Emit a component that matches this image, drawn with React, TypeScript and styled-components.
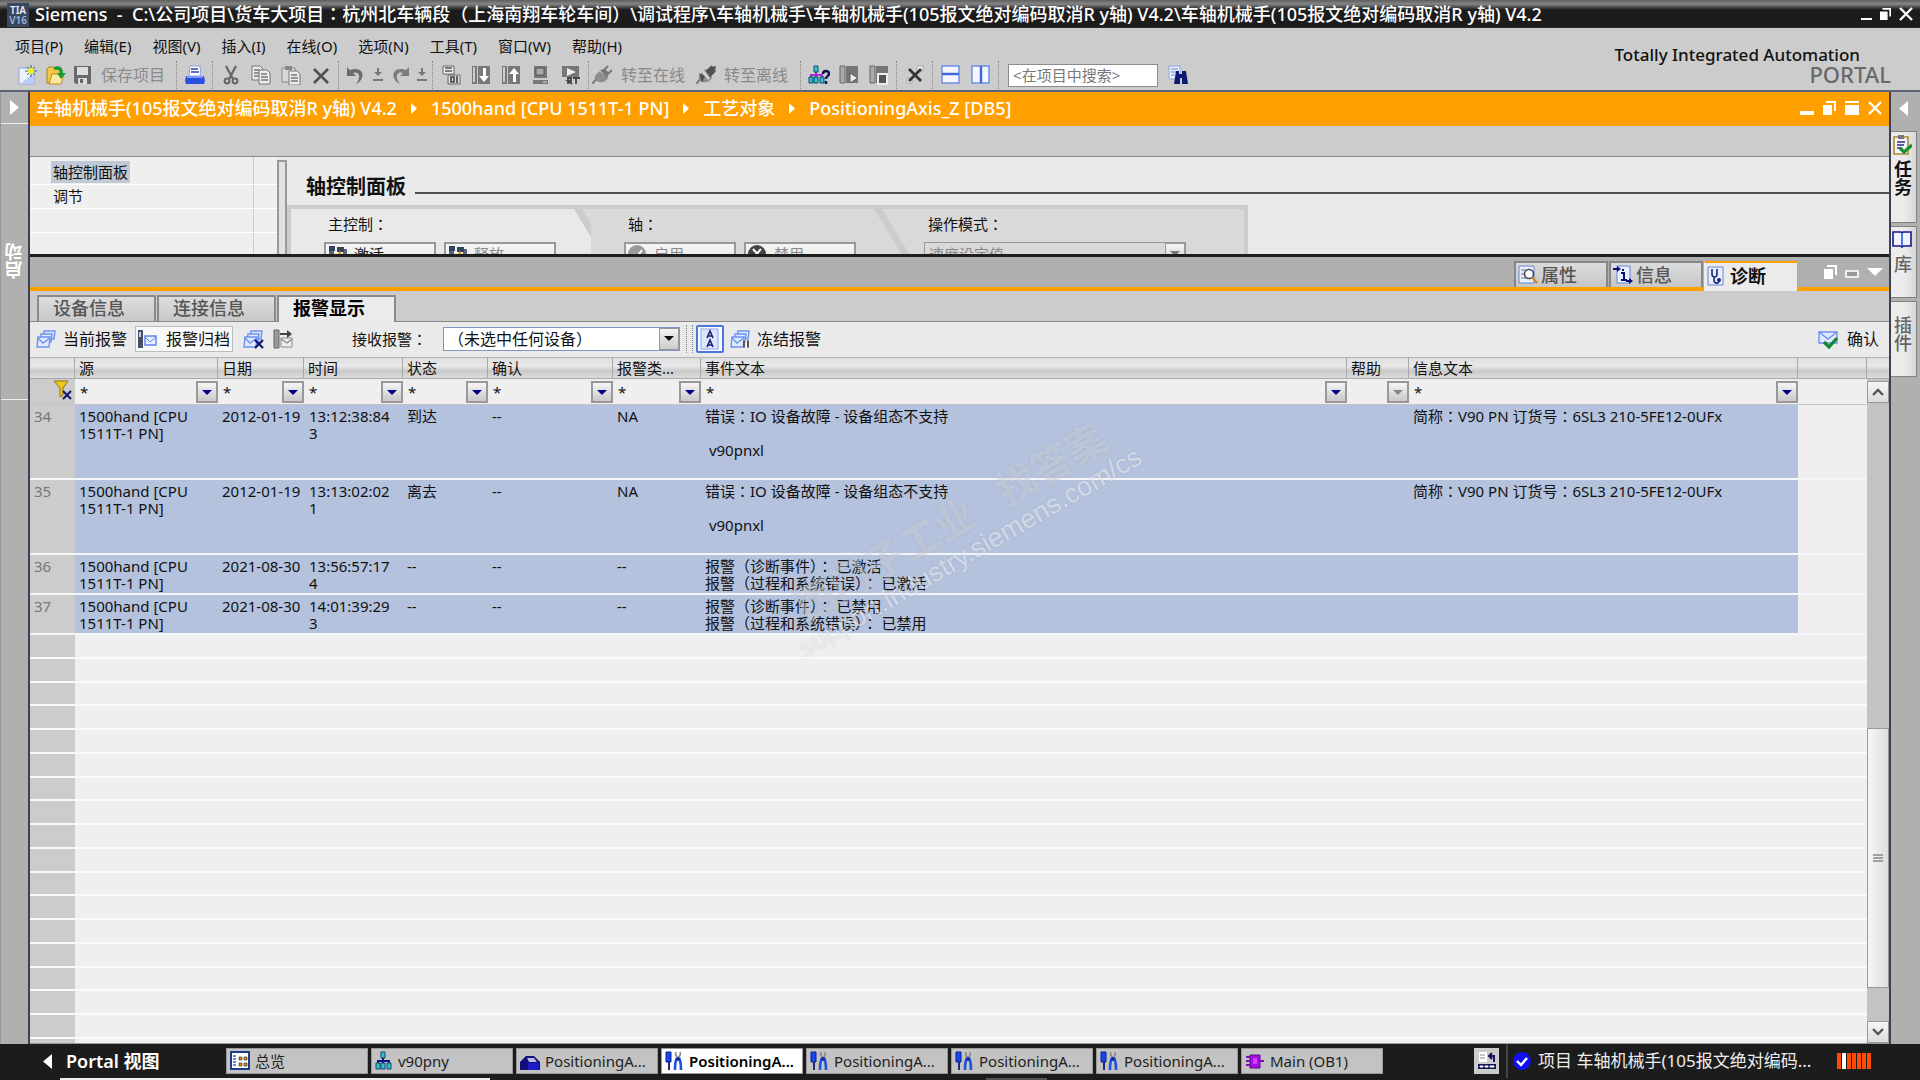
import React from "react";
import styled, { createGlobalStyle, css } from "styled-components";

const Global = createGlobalStyle`
  *, *::before, *::after { box-sizing: border-box; }
  body { margin: 0; background: #b0b0b0; }
  body, button, input, select, table {
    font-family: "Noto Sans", "Noto Sans CJK SC", sans-serif;
    font-size: 15px;
    line-height: 18px;
    color: #111;
  }
  button { border: 0; padding: 0; background: none; }
  h1, h2 { margin: 0; font-size: inherit; }
`;

/* ---------- frame ---------- */
const Window = styled.div`
  display: flex;
  flex-direction: column;
  height: 100vh;
  overflow: hidden;
`;
const TitleBar = styled.header`
  flex: none;
  display: flex;
  align-items: center;
  height: 28px;
  padding: 0 7px 0 7px;
  background: linear-gradient(#5e5e5e 0, #858585 4px, #3c3c3c 8px, #1c1c1c 10px, #1c1c1c 27px, #333 28px);
`;
const TitleText = styled.h1`
  flex: 1;
  margin-left: 6px;
  color: #fff;
  font-size: 18px;
  font-weight: 500;
  line-height: 28px;
  white-space: pre;
`;
const WindowButtons = styled.div<{ $gap: number }>`
  display: flex;
  align-items: center;
  gap: ${(p) => p.$gap}px;
  button { display: flex; }
`;
const MenuArea = styled.div`
  flex: none;
  display: flex;
  justify-content: space-between;
  height: 64px;
  background: #ccc;
  border-bottom: 2px solid #5c6372;
`;
const MenuRow = styled.nav`
  display: flex;
  align-items: flex-start;
  gap: 21px;
  padding: 8px 0 0 15px;
  height: 32px;
  button { line-height: 20px; white-space: nowrap; }
`;
const Brand = styled.div`
  padding: 18px 29px 0 0;
  text-align: right;
  font-weight: 500;
  line-height: 20px;
`;
const BrandTop = styled.div`
  font-size: 17px;
  margin-right: 31px;
  line-height: 18px;
`;
const BrandBottom = styled.div`
  font-size: 22px;
  font-weight: 500;
  color: #696969;
`;
const Tools = styled.div`
  display: flex;
  align-items: center;
  height: 30px;
  padding-left: 12px;
`;
const ToolButton = styled.button<{ $w?: number }>`
  display: flex;
  align-items: center;
  justify-content: center;
  width: ${(p) => p.$w ?? 30}px;
  height: 26px;
`;
const LabelTool = styled.button<{ $gap: number; $pad: number }>`
  display: flex;
  align-items: center;
  gap: ${(p) => p.$gap}px;
  padding-right: ${(p) => p.$pad}px;
  font-size: 16px;
  color: #8a8a8a;
  white-space: nowrap;
`;
const Sep = styled.span`
  width: 1px;
  height: 28px;
  margin: 0 3px 0 2px;
  border-left: 1px dotted #888;
`;
const Search = styled.input`
  width: 150px;
  height: 23px;
  margin: 0 5px 0 6px;
  padding: 0 4px;
  border: 1px solid #8c8c8c;
  border-radius: 0;
  background: #fff;
  &::placeholder { color: #777; opacity: 1; }
`;

const Body = styled.div`
  flex: 1;
  display: flex;
  min-height: 0;
`;
const LeftStrip = styled.aside`
  flex: none;
  display: flex;
  flex-direction: column;
  width: 30px;
  background: #b0b0b0;
  border-left: 1px solid #999;
  border-right: 2px solid #3c4050;
`;
const StripTop = styled.button`
  display: flex;
  align-items: center;
  justify-content: center;
  height: 32px;
  border-bottom: 1px solid #eee;
`;
const StripLabel = styled.button`
  height: 276px;
  padding: 0 2px;
  border-top: 1px solid #eee;
  color: #fff;
  font-size: 18px;
  font-weight: 700;
  line-height: 22px;
  writing-mode: vertical-rl;
  transform: rotate(180deg);
`;
const RightStrip = styled.aside`
  flex: none;
  width: 31px;
  background: #b0b0b0;
  border-left: 2px solid #3c4050;
  display: flex;
  flex-direction: column;
  gap: 3px;
`;
const RightTop = styled.button`
  display: flex;
  align-items: center;
  justify-content: center;
  width: 24px;
  height: 28px;
  margin: 2px 0 6px;
`;
const SideTab = styled.button<{ $h: number; $active?: boolean; $pad?: number }>`
  display: flex;
  flex-direction: column;
  align-items: center;
  gap: 5px;
  width: 26px;
  height: ${(p) => p.$h}px;
  padding: ${(p) => p.$pad ?? 3}px 3px 0 0;
  border: 1px solid #828282;
  border-left: 0;
  background: linear-gradient(90deg, #ececec 50%, #d8d8d8);
  span {
    writing-mode: vertical-rl;
    font-size: 18px;
    line-height: 22px;
    font-weight: ${(p) => (p.$active ? 700 : 500)};
    color: ${(p) => (p.$active ? "#111" : "#666")};
  }
`;
const Main = styled.main`
  flex: 1;
  min-width: 0;
  display: flex;
  flex-direction: column;
`;

/* ---------- editor ---------- */
const Crumbs = styled.div`
  flex: none;
  display: flex;
  align-items: center;
  height: 34px;
  padding: 0 7px 2px 6px;
  background: #ffa000;
  color: #fff;
`;
const CrumbList = styled.nav`
  flex: 1;
  display: flex;
  align-items: center;
  gap: 14px;
  font-size: 18px;
  font-weight: 500;
  line-height: 28px;
  white-space: nowrap;
`;
const EditorBar = styled.div`
  flex: none;
  height: 31px;
  background: #ccc;
  border-bottom: 1px solid #8a8a8a;
`;
const Editor = styled.section`
  flex: none;
  display: flex;
  height: 97px;
  overflow: hidden;
  background: #eaeaea;
`;
const Tree = styled.ul`
  flex: none;
  width: 247px;
  margin: 0;
  padding: 4px 0 0;
  list-style: none;
  background: linear-gradient(90deg, transparent 223px, #ccc 223px, #ccc 224px, transparent 224px) #efefef;
`;
const TreeItem = styled.li<{ $sel?: boolean }>`
  height: 24px;
  padding-left: 21px;
  border-bottom: 1px solid #fff;
  button {
    padding: 0 2px;
    line-height: 22px;
    background: ${(p) => (p.$sel ? "#bfcad6" : "none")};
  }
`;
const Splitter = styled.div`
  flex: none;
  width: 10px;
  margin-top: 3px;
  border: 2px solid #999;
  border-bottom: 0;
  background: #e2e2e2;
`;
const Panel = styled.div`
  flex: 1;
  min-width: 0;
`;
const PanelHead = styled.div`
  display: flex;
  align-items: center;
  gap: 9px;
  height: 48px;
  padding: 12px 0 0 19px;
  &::after {
    content: "";
    flex: 1;
    height: 2px;
    margin-top: 12px;
    background: #505050;
  }
  h2 { font-size: 20px; line-height: 24px; }
`;
const Steps = styled.div`
  display: grid;
  grid-template-columns: 300px 300px 359px;
  width: 961px;
  height: 80px;
  border: 4px solid #ccc;
  border-bottom: 0;
  background: #d9d9d9;
`;
const Step = styled.div<{ $first?: boolean; $last?: boolean }>`
  position: relative;
  padding: 6px 0 0 37px;
  ${(p) =>
    !p.$last &&
    css`
      &::before, &::after {
        content: "";
        position: absolute;
        inset: 0;
        right: -24px;
        background: #ccc;
        clip-path: polygon(283px 0, 291px 0, 319px 46px, 300px 80px, 290px 80px, 311px 46px);
      }
      &::before {
        background: ${p.$first ? "#e9e9e9" : "#d9d9d9"};
        clip-path: polygon(0 0, 283px 0, 311px 46px, 290px 80px, 0 80px);
      }
    `}
  > * { position: relative; z-index: 1; }
`;
const StepLabel = styled.div`
  display: block;
  line-height: 18px;
  margin-bottom: 9px;
`;
const StepRow = styled.div`
  display: flex;
  gap: 8px;
  margin-left: -4px;
`;
const StepButton = styled.button<{ $dim?: boolean }>`
  display: flex;
  align-items: center;
  gap: 6px;
  width: 112px;
  height: 24px;
  padding-left: 2px;
  border: 2px solid #999;
  background: linear-gradient(#f5f5f5, #e4e4e4);
  color: ${(p) => (p.$dim ? "#8a8a8a" : "#111")};
`;
const Dropdown = styled.div<{ $w: number; $blue?: boolean }>`
  display: flex;
  width: ${(p) => p.$w}px;
  height: 24px;
  margin-right: 4px;
  border: 1px solid ${(p) => (p.$blue ? "#7f96c4" : "#999")};
  background: ${(p) => (p.$blue ? "#fff" : "#d9d9d9")};
  position: relative;
  select {
    appearance: none;
    flex: 1;
    min-width: 0;
    border: 0;
    border-radius: 0;
    padding: 0 24px 0 4px;
    background: none;
    font-size: ${(p) => (p.$blue ? 16 : 15)}px;
    color: ${(p) => (p.$blue ? "#111" : "#888")};
    opacity: 1;
  }
  &::after {
    content: "";
    position: absolute;
    top: 0;
    right: 0;
    width: 20px;
    height: 100%;
    border: 1px solid #999;
    background: linear-gradient(#f4f4f4, #ccc);
    pointer-events: none;
  }
  svg { position: absolute; right: 5px; top: 8px; z-index: 1; pointer-events: none; }
`;

/* ---------- inspector ---------- */
const InspectorHead = styled.div`
  flex: none;
  display: flex;
  justify-content: flex-end;
  align-items: flex-end;
  height: 37px;
  border-top: 3px solid #1e1e1e;
  background: linear-gradient(#b0b0b0 30px, #ffa000 30px);
`;
const HeadTab = styled.button<{ $active?: boolean }>`
  display: flex;
  align-items: center;
  gap: 3px;
  width: 94px;
  height: 26px;
  margin: 0 1px 4px 0;
  padding-left: 2px;
  border: 2px solid #878787;
  border-bottom: 0;
  background: linear-gradient(#dcdcdc, #c6c6c6);
  color: #555;
  font-size: 18px;
  line-height: 22px;
  font-weight: 500;
  ${(p) =>
    p.$active &&
    css`
      height: 30px;
      margin-bottom: 0;
      padding-bottom: 3px;
      border-color: #ffa000 #aaa transparent #eee;
      border-width: 2px 1px 0;
      background: #ebebeb;
      color: #111;
      font-weight: 700;
    `}
`;
const HeadIcons = styled.div`
  display: flex;
  align-items: center;
  gap: 8px;
  height: 34px;
  padding: 0 6px 4px 25px;
  button { display: flex; }
`;
const Tabs = styled.div`
  flex: none;
  display: flex;
  gap: 1px;
  height: 31px;
  padding: 4px 7px 0;
  background: #ccc;
  border-bottom: 1px solid #8a8a8a;
`;
const Tab = styled.button<{ $active?: boolean }>`
  width: 119px;
  height: 26px;
  padding: 0 0 3px 14px;
  border: 2px solid #8a8a8a;
  border-bottom: 0;
  background: linear-gradient(#ddd, #c8c8c8);
  color: #555;
  font-size: 18px;
  font-weight: 500;
  line-height: 22px;
  text-align: left;
  ${(p) =>
    p.$active &&
    css`
      height: 27px;
      padding-bottom: 4px;
      background: #ebebeb;
      color: #000;
      font-weight: 700;
    `}
`;
const AlarmTools = styled.div`
  flex: none;
  display: flex;
  align-items: center;
  height: 35px;
  padding: 0 10px 1px 6px;
  background: #eaeaea;
`;
const AlarmButton = styled.button<{ $on?: boolean; $tight?: boolean; $last?: boolean }>`
  display: flex;
  align-items: center;
  gap: ${(p) => (p.$tight ? 6 : 9)}px;
  height: 32px;
  margin-right: ${(p) => (p.$last ? 0 : 8)}px;
  font-size: 16px;
  white-space: nowrap;
  ${(p) =>
    p.$on &&
    css`
      margin-right: 10px;
      padding: 0 2px 0 1px;
      height: 26px;
      border: 1px solid #bbb;
      background: #f8f8f8;
    `}
`;
const SmallIcon = styled.button`
  display: flex;
  margin-right: 9px;
`;
const FieldLabel = styled.label`
  margin: 0 16px 0 50px;
`;
const AutoScroll = styled.button`
  display: flex;
  align-items: center;
  justify-content: center;
  width: 28px;
  height: 28px;
  margin-right: 6px;
  border: 2px solid #4a78d8;
  border-radius: 2px;
  background: #f8faff;
`;
const Grow = styled.span`
  flex: 1;
`;

/* ---------- alarm table ---------- */
const GridArea = styled.div`
  flex: 1;
  display: flex;
  min-height: 0;
  background: #efefef;
  border-bottom: 1px solid #999;
`;
const GridMain = styled.div`
  position: relative;
  flex: 1;
  min-width: 0;
  display: flex;
  flex-direction: column;
`;
const headFill = "linear-gradient(#dedede, #e9e9e9 8px, #c9c9c9 13px, #dcdcdc)";
const Table = styled.table`
  flex: none;
  width: 100%;
  table-layout: fixed;
  border-collapse: separate;
  border-spacing: 0;
`;
const Th = styled.th`
  height: 22px;
  padding: 0 0 0 4px;
  border-top: 1px solid #b5b5b5;
  border-right: 1px solid #aaa;
  border-bottom: 1px solid #aaa;
  background: ${headFill};
  font-weight: 400;
  line-height: 18px;
  text-align: left;
  white-space: nowrap;
  overflow: hidden;
`;
const FilterTd = styled.td<{ $corner?: boolean }>`
  height: 26px;
  padding: 0;
  border-bottom: 1px solid #c4c4c4;
  background: ${(p) => (p.$corner ? "#ccc" : "#efefef")};
  text-align: right;
  line-height: 0;
`;
const FilterCell = styled.div`
  display: flex;
  height: 25px;
  padding-top: 1px;
  align-items: center;
  input {
    flex: 1;
    min-width: 0;
    height: 22px;
    border: 0;
    padding: 0 0 0 5px;
    background: none;
  }
`;
const FilterButton = styled.button`
  display: flex;
  align-items: center;
  justify-content: center;
  width: 22px;
  height: 22px;
  border: 2px solid #999;
  background: linear-gradient(#f6f6f6, #c8c8c8);
`;
const Row = styled.tr<{ $h: number }>`
  height: ${(p) => p.$h}px;
`;
const Td = styled.td`
  padding: 3px 6px 0 4px;
  border-bottom: 2px solid #f4f6fa;
  background: #b4c2de;
  vertical-align: top;
  line-height: 17px;
  white-space: pre-wrap;
  word-break: break-word;
`;
const DateTd = styled(Td)`
  padding-right: 0;
  white-space: nowrap;
`;
const TimeTd = styled(Td)`
  padding-left: 5px;
  word-break: break-all;
`;
const NumTd = styled(Td)`
  background: #ccc;
  color: #777;
`;
const BlankTd = styled(Td)`
  background: #efefef;
`;
const Filler = styled.div`
  flex: 1;
  display: flex;
  flex-direction: column;
  padding-bottom: 4px;
  background: linear-gradient(90deg, #ccc 45px, #efefef 45px);
`;
const FillerRow = styled.div`
  flex: 1;
  border-bottom: 2px solid #fafafa;
`;
const ScrollCol = styled.div`
  flex: none;
  display: flex;
  flex-direction: column;
  width: 22px;
  background: #c3c3c3;
`;
const ScrollHead = styled.div`
  height: 22px;
  border-top: 1px solid #b5b5b5;
  border-bottom: 1px solid #aaa;
  margin-bottom: 2px;
  background: ${headFill};
`;
const ScrollButton = styled.button`
  display: flex;
  align-items: center;
  justify-content: center;
  flex: none;
  height: 22px;
  border: 1px solid #999;
  background: linear-gradient(#f6f6f6, #dcdcdc);
`;
const Track = styled.div`
  flex: 1;
  display: flex;
  flex-direction: column;
`;
const Thumb = styled.div`
  flex: 0 0 42%;
  display: flex;
  align-items: center;
  justify-content: center;
  border: 1px solid #999;
  background: linear-gradient(90deg, #f6f6f6, #dedede);
`;
const TrackSpace = styled.div<{ $n: number }>`
  flex: ${(p) => p.$n};
`;
const Watermark = styled.div`
  position: absolute;
  left: 778px;
  top: 234px;
  transform: rotate(-30deg);
  transform-origin: 0 100%;
  color: rgba(255, 255, 255, 0.3);
  text-shadow: 0 0 2px rgba(120, 125, 140, 0.3);
  font-weight: 700;
  white-space: nowrap;
  pointer-events: none;
`;
const MarkBig = styled.div`
  display: flex;
  gap: 32px;
  padding-left: 18px;
  font-size: 40px;
  line-height: 42px;
`;
const MarkUrl = styled.div`
  font-family: "Liberation Sans", Arial, sans-serif;
  font-size: 27px;
  font-weight: 400;
  line-height: 30px;
  color: rgba(255, 255, 255, 0.5);
`;

/* ---------- bottom bar ---------- */
const Bottom = styled.footer`
  flex: none;
  display: flex;
  align-items: center;
  height: 36px;
  padding: 0 48px 2px 43px;
  background: linear-gradient(90deg, transparent 60px, #eee 60px, #eee 490px, transparent 490px, transparent 986px, #555 986px, #555 1047px, transparent 1047px)
      0 100% / 100% 2px no-repeat, #1c1c1c;
`;
const PortalButton = styled.button`
  display: flex;
  align-items: center;
  gap: 14px;
  width: 183px;
  color: #fff;
  font-size: 18px;
  font-weight: 600;
`;
const TaskList = styled.div`
  flex: 1;
  display: flex;
  gap: 3px;
`;
const Task = styled.button<{ $active?: boolean }>`
  display: flex;
  align-items: center;
  gap: 5px;
  width: 142px;
  height: 26px;
  padding-left: 3px;
  border: 1px solid #999;
  background: ${(p) => (p.$active ? "#fff" : "#c3c3c3")};
  color: ${(p) => (p.$active ? "#000" : "#222")};
  font-weight: ${(p) => (p.$active ? 600 : 400)};
  white-space: nowrap;
`;
const Square = styled.button`
  display: flex;
  align-items: center;
  justify-content: center;
  width: 25px;
  height: 26px;
  background: #ccc;
`;
const Status = styled.div`
  display: flex;
  align-items: center;
  gap: 7px;
  height: 34px;
  margin-left: 7px;
  padding-left: 5px;
  border-left: 2px solid #444;
  color: #eee;
  font-size: 17px;
  white-space: nowrap;
`;
const StatusText = styled.span`
  width: 292px;
`;

/* Full-width colons sit in the middle of their box */
const Colon = styled.span`
  font-family: "Noto Sans CJK TC", sans-serif;
  line-height: 0;
`;
const T = ({ s }: { s: string }) => (
  <>
    {s.split(/(：)/).map((p, i) => (p === "：" ? <Colon key={i} lang="zh-TW">：</Colon> : p))}
  </>
);

/* ---------- icons ---------- */
const Tri = ({ d, c, s = 10 }: { d: "l" | "r" | "d"; c: string; s?: number }) => (
  <svg
    width={d === "d" ? s + 2 : s - 1}
    height={d === "d" ? Math.round(s * 0.6) : Math.round(s * 1.5)}
    viewBox="0 0 10 10"
    preserveAspectRatio="none"
    fill={c}
  >
    <path d={d === "l" ? "M10 0v10L0 5z" : d === "r" ? "M0 0v10l10-5z" : "M0 0h10L5 10z"} />
  </svg>
);
const Ic = ({ children, w = 20 }: { children: React.ReactNode; w?: number }) => (
  <svg width={w} height="20" viewBox={`0 0 ${w} 20`} fill="none">
    {children}
  </svg>
);
const Restore = ({ s = 13 }: { s?: number }) => (
  <svg width={s} height={s + 1} viewBox="0 0 13 14" fill="#fff">
    <path d="M3 0h10v10h-2V2H3zM0 4h9v10H0z" />
  </svg>
);
const Close = () => (
  <svg width="14" height="14" viewBox="0 0 14 14" stroke="#fff" strokeWidth="2.4">
    <path d="M1 1l12 12M13 1L1 13" />
  </svg>
);
const Envelopes = ({ extra }: { extra?: React.ReactNode }) => (
  <Ic w={21}>
    <g fill="#dfe8ff" stroke="#6d92f0" strokeWidth="1.4">
      <path d="M8 2h11l-1 8H7z" />
      <path d="M5 5h11l-1 8H4z" />
      <path d="M2 8h12l-1 10H1z" />
      <path d="M2 9l5 5 7-5" />
    </g>
    {extra}
  </Ic>
);
const Plug = ({ off }: { off?: boolean }) => (
  <Ic w={20}>
    <path d="M1 19c0-3 2-3 4-5" stroke="#777" strokeWidth="2" />
    <path d="M4 9l4-3 8 8-4 3c-3 1-6 0-8-2s-2-4 0-6z" fill="#8e8e8e" transform="rotate(-8 9 11)" />
    <path d="M8 5l7 8 2-5-4-4z" fill="#777" />
    <path d="M12 5l4-4M16 9l4-4" stroke="#777" strokeWidth="2" />
    {off && <path d="M10 6l4-4 6-1-2 7-4 4zM3 8l6 3-3 7z" fill="#505050" />}
    {off && <path d="M7 7l6 7" stroke="#ddd" strokeWidth="2" />}
  </Ic>
);
const Network = ({ q }: { q?: boolean }) => (
  <Ic w={q ? 22 : 18}>
    <path d="M8 6v5M3 14v-4h11v4M8 10v4" stroke={q ? "#a030d0" : "#10108a"} strokeWidth="2" />
    <path d="M6 1h4v6H6zM1 12h4v6H1zM6 12h4v6H6zM12 12h4v6h-4z" fill="#2bc4c8" stroke="#16456e" strokeWidth="1" />
    {q && (
      <path d="M15 9c0-4 6-4 6 0 0 2-3 2-3 5M18 16v3" stroke="#10105a" strokeWidth="2.4" />
    )}
  </Ic>
);
const AxisTools = () => (
  <Ic w={19}>
    <path d="M1 1h5v10H1z" fill="#1a48e8" stroke="#0a1e90" />
    <path d="M3 11h2v8H3z" fill="#222a70" />
    <path d="M11 1c-1 2 0 4 2 6M15 1c1 2 0 4-2 6" stroke="#888" strokeWidth="1.6" />
    <path d="M12 7c-2 3-2 6-2 12M14 7c2 3 2 6 2 12" stroke="#1f50e0" strokeWidth="2.6" />
    <circle cx="13" cy="8" r="2" fill="#1030a0" />
  </Ic>
);
const StepDown = () => (
  <svg width="10" height="14" viewBox="0 0 10 14">
    <path d="M4 0h2v4h3L5 8 1 4h3zM0 11h10v2H0z" fill="#777" />
  </svg>
);
const Page = ({ x = 0, y = 0, c = "#777" }: { x?: number; y?: number; c?: string }) => (
  <g transform={`translate(${x} ${y})`}>
    <path d="M1 1h8l3 3v11H1z" fill="#ececec" stroke={c} strokeWidth="1" />
    <path d="M3 5h6M3 8h7M3 11h7" stroke={c} strokeWidth="1.5" />
  </g>
);
const Device = ({ arrow }: { arrow: "d" | "u" }) => (
  <Ic>
    <path d="M1 1h5v18H1zM7 1h12v18H7z" fill="#787878" />
    <path d="M2 2h2v15H2z" fill="#ccc" />
    <path
      d={arrow === "d" ? "M12 3h3v8h3l-5 6-5-6h4z" : "M12 17h3V9h3l-5-6-5 6h4z"}
      fill="#fff"
    />
  </Ic>
);
const Module = ({ kind }: { kind: "play" | "stop" }) => (
  <Ic>
    <path d="M1 1h5v17H1z" fill="#aaa" stroke="#666" />
    <path d="M7 1h12v17H7z" fill="#777" />
    {kind === "play" ? (
      <path d="M11 8l8 5-8 5z" fill="#eee" stroke="#555" />
    ) : (
      <path d="M9 9h9v10H9z" fill="#555" stroke="#eee" strokeWidth="2" />
    )}
  </Ic>
);
const Drive = () => (
  <Ic>
    <path d="M1 4h5v6h9V5h4v10H7L1 12z" fill="#56657c" />
    <path d="M1 2h6v5H1zM9 3h7v5H9z" fill="#34435c" />
    <path d="M8 12l4-5 4 6z" fill="#e99a10" />
  </Ic>
);
const Layout = ({ v }: { v?: boolean }) => (
  <Ic>
    <path d="M1 1h17v17H1z" fill="#f4f7ff" stroke="#6f8fe8" strokeWidth="1.5" />
    <path d={v ? "M10 1v17" : "M1 9h17"} stroke="#4468d8" strokeWidth="2.5" />
  </Ic>
);

const menus = ["项目(P)", "编辑(E)", "视图(V)", "插入(I)", "在线(O)", "选项(N)", "工具(T)", "窗口(W)", "帮助(H)"];

const columns: { label: string; w?: number; filter?: "on" | "off" }[] = [
  { label: "源", w: 143, filter: "on" },
  { label: "日期", w: 86, filter: "on" },
  { label: "时间", w: 99, filter: "on" },
  { label: "状态", w: 85, filter: "on" },
  { label: "确认", w: 125, filter: "on" },
  { label: "报警类...", w: 88, filter: "on" },
  { label: "事件文本", filter: "on" },
  { label: "帮助", w: 62, filter: "off" },
  { label: "信息文本", w: 389, filter: "on" },
];

const fault = "错误：IO 设备故障 - 设备组态不支持\n\n v90pnxl";
const info = "简称：V90 PN 订货号：6SL3 210-5FE12-0UFx";
const alarms = [
  { n: 34, h: 75, date: "2012-01-19", time: "13:12:38:843", st: "到达", type: "NA", text: fault, info },
  { n: 35, h: 75, date: "2012-01-19", time: "13:13:02:021", st: "离去", type: "NA", text: fault, info },
  { n: 36, h: 40, date: "2021-08-30", time: "13:56:57:174", st: "--", type: "--", text: "报警（诊断事件）： 已激活\n报警（过程和系统错误）： 已激活", info: "" },
  { n: 37, h: 40, date: "2021-08-30", time: "14:01:39:293", st: "--", type: "--", text: "报警（诊断事件）： 已禁用\n报警（过程和系统错误）： 已禁用", info: "" },
];

const OverviewIcon = () => (
  <Ic>
    <path d="M1 1h18v17H1z" fill="#fff" stroke="#1c3c88" strokeWidth="2" />
    <path d="M3 5h3M3 8h3M3 11h3M3 14h3" stroke="#3a62c0" strokeWidth="1.5" />
    <path d="M9 6h3v3H9zM14 6h3v3h-3zM9 12h3v3H9zM14 12h3v3h-3z" fill="#e08a20" stroke="#222" strokeWidth=".6" />
  </Ic>
);
const ObjectIcon = () => (
  <Ic>
    <path d="M0 11l6-6h8l6 6v8H0z" fill="#10107a" />
    <path d="M8 12h11v7H8z" fill="#1c1cc8" />
    <path d="M7 7h7l3 4H9z" fill="#b8b8e0" />
  </Ic>
);
const BlockIcon = () => (
  <Ic>
    <path d="M5 4h10v13H5z" fill="#a010e0" stroke="#5c0890" />
    <path d="M1 6h4M1 10h4M1 14h4M15 10h4" stroke="#7a10b8" strokeWidth="2" />
    <path d="M8 7h4v6H8z" fill="#d040ff" />
  </Ic>
);
const tasks: { label: string; icon: React.ReactNode; active?: boolean }[] = [
  { label: "总览", icon: <OverviewIcon /> },
  { label: "v90pny", icon: <Network /> },
  { label: "PositioningA...", icon: <ObjectIcon /> },
  { label: "PositioningA...", icon: <AxisTools />, active: true },
  { label: "PositioningA...", icon: <AxisTools /> },
  { label: "PositioningA...", icon: <AxisTools /> },
  { label: "PositioningA...", icon: <AxisTools /> },
  { label: "Main (OB1)", icon: <BlockIcon /> },
];

const title =
  "Siemens  -  C:\\公司项目\\货车大项目：杭州北车辆段（上海南翔车轮车间）\\调试程序\\车轴机械手\\车轴机械手(105报文绝对编码取消R y轴) V4.2\\车轴机械手(105报文绝对编码取消R y轴) V4.2";

const MainTools = () => (
  <Tools>
    <ToolButton $w={29} aria-label="新建">
      <Ic>
        <path d="M2 3h11l4 4v12H2z" fill="#eef3ff" stroke="#8ea4dc" />
        <path d="M4 18L16 9v9z" fill="#b9cbfa" />
        <path d="M14 0v12M8 6h12M10 2l8 8M18 2l-8 8" stroke="#2c6d60" strokeWidth="1" />
        <circle cx="14" cy="6" r="3" fill="#f4f020" />
      </Ic>
    </ToolButton>
    <ToolButton $w={29} aria-label="打开">
      <Ic>
        <path d="M1 4l2-2h5l2 2h4v14H1z" fill="#f3c64a" stroke="#b07c18" />
        <path d="M3 19l3-10h12l-3 10z" fill="#fce9a2" stroke="#c08a20" />
        <path d="M8 2c6-2 9 1 9 6h3l-5 6-4-6h3c0-3-2-4-6-3z" fill="#1d9a34" />
      </Ic>
    </ToolButton>
    <LabelTool $gap={8} $pad={9}>
      <Ic w={23}>
        <path d="M4 1h17v18H6l-2-2z" fill="#6a6a6a" />
        <path d="M7 2h11v8H7zM8 13h9v6H8z" fill="#ddd" />
        <path d="M10 14h3v4h-3z" fill="#666" />
      </Ic>
      保存项目
    </LabelTool>
    <Sep />
    <ToolButton aria-label="打印">
      <Ic>
        <path d="M5 1h10l1 10H4z" fill="#fff" stroke="#8ca0d8" />
        <path d="M6 4h7M6 7h8" stroke="#2b3fb0" strokeWidth="1.5" />
        <path d="M1 11h18l1 5-1 3H1l-1-3z" fill="#2a50e0" />
        <path d="M2 11h16v2H2z" fill="#7d9bff" />
      </Ic>
    </ToolButton>
    <Sep />
    <ToolButton aria-label="剪切">
      <Ic>
        <path d="M5 1l7 13M15 1L8 14" stroke="#666" strokeWidth="2.2" />
        <circle cx="6" cy="16" r="2.4" stroke="#666" strokeWidth="2" />
        <circle cx="14" cy="16" r="2.4" stroke="#666" strokeWidth="2" />
      </Ic>
    </ToolButton>
    <ToolButton aria-label="复制"><Ic><Page /><Page x={7} y={4} /></Ic></ToolButton>
    <ToolButton aria-label="粘贴">
      <Ic>
        <path d="M1 3h13v14H1z" fill="#d8d8d8" stroke="#8a8a8a" />
        <path d="M4 1h7v4H4z" fill="#888" />
        <Page x={7} y={5} />
      </Ic>
    </ToolButton>
    <ToolButton aria-label="删除"><Ic><path d="M3 4l14 14M17 4L3 18" stroke="#505050" strokeWidth="2.6" /></Ic></ToolButton>
    <Sep />
    <ToolButton $w={28} aria-label="撤消">
      <Ic>
        <path d="M1 2v9h9L7 8c5-2 8 2 5 8l-2 3c9-4 9-16-2-15L4 5z" fill="#6c6c6c" />
      </Ic>
    </ToolButton>
    <ToolButton $w={16} aria-label="撤消列表"><StepDown /></ToolButton>
    <ToolButton $w={28} aria-label="重做">
      <Ic>
        <path d="M19 2v9h-9l3-3C8 6 5 10 8 16l2 3C1 15 1 3 12 4l4 1z" fill="#7c7c7c" />
      </Ic>
    </ToolButton>
    <ToolButton $w={16} aria-label="重做列表"><StepDown /></ToolButton>
    <Sep />
    <ToolButton aria-label="编译">
      <Ic>
        <path d="M2 1h11v8H2z" fill="#eee" stroke="#666" />
        <path d="M4 3h7M4 6h7" stroke="#555" strokeWidth="1.5" />
        <path d="M7 10h12v9H7z" fill="#ddd" stroke="#666" />
        <path d="M10 12h3v5h-3zM16 11v7" stroke="#444" strokeWidth="1.6" />
      </Ic>
    </ToolButton>
    <ToolButton aria-label="下载"><Device arrow="d" /></ToolButton>
    <ToolButton aria-label="上传"><Device arrow="u" /></ToolButton>
    <ToolButton aria-label="仿真">
      <Ic>
        <path d="M3 1h13v12H3zM2 15h15v4H2z" fill="#777" />
        <path d="M5 3h8v7H5z" fill="#aaa" stroke="#555" />
        <path d="M12 17h4" stroke="#ddd" />
      </Ic>
    </ToolButton>
    <ToolButton aria-label="启动运行系统">
      <Ic>
        <path d="M1 1h17v11H1z" fill="#777" />
        <path d="M6 3l9 4-9 4z" fill="#eee" />
        <path d="M7 19v-6h3v3H7l4 3M12 13h7M15 13v6" stroke="#444" strokeWidth="1.8" />
      </Ic>
    </ToolButton>
    <Sep />
    <LabelTool $gap={9} $pad={11}><Plug />转至在线</LabelTool>
    <LabelTool $gap={8} $pad={10}><Plug off />转至离线</LabelTool>
    <Sep />
    <ToolButton aria-label="可访问的设备"><Network q /></ToolButton>
    <ToolButton aria-label="启动 CPU"><Module kind="play" /></ToolButton>
    <ToolButton aria-label="停止 CPU"><Module kind="stop" /></ToolButton>
    <Sep />
    <ToolButton aria-label="交叉引用">
      <Ic>
        <path d="M12 1h6v5h-6zM2 13h5v5H2z" fill="#f4f4f4" stroke="#aaa" />
        <path d="M4 4l12 12M16 4L4 16" stroke="#333" strokeWidth="2.8" />
      </Ic>
    </ToolButton>
    <Sep />
    <ToolButton aria-label="水平拆分"><Layout /></ToolButton>
    <ToolButton aria-label="垂直拆分"><Layout v /></ToolButton>
    <Sep />
    <Search aria-label="在项目中搜索" placeholder="<在项目中搜索>" />
    <ToolButton aria-label="搜索">
      <Ic>
        <path d="M1 1h11v13H1z" fill="#e6edff" stroke="#92a8e0" />
        <path d="M3 4h7M3 7h5M3 10h4" stroke="#7088cc" />
        <path d="M8 6h3v3h3V6h4l2 13h-6v-6h-2v6H6z" fill="#101a70" />
      </Ic>
    </ToolButton>
  </Tools>
);

export default function App() {
  return (
    <Window>
      <Global />
      <TitleBar>
        <svg width="22" height="26" viewBox="0 0 22 26">
          <rect y="2" width="22" height="24" fill="#39475f" />
          <g fontFamily="Noto Sans" fontSize="10" fontWeight="600" textAnchor="middle">
            <text x="11" y="13" fill="#e8ecf4">TIA</text>
            <text x="11" y="23" fill="#9fb4e0">V16</text>
          </g>
        </svg>
        <TitleText><T s={title} /></TitleText>
        <WindowButtons $gap={8}>
          <button aria-label="最小化"><svg width="11" height="12"><path d="M0 10h11v2H0z" fill="#fff" /></svg></button>
          <button aria-label="还原"><Restore s={11} /></button>
          <button aria-label="关闭"><Close /></button>
        </WindowButtons>
      </TitleBar>

      <MenuArea>
        <div>
          <MenuRow>{menus.map((m) => <button key={m}>{m}</button>)}</MenuRow>
          <MainTools />
        </div>
        <Brand>
          <BrandTop>Totally Integrated Automation</BrandTop>
          <BrandBottom>PORTAL</BrandBottom>
        </Brand>
      </MenuArea>

      <Body>
        <LeftStrip>
          <StripTop aria-label="展开"><Tri d="r" c="#fff" /></StripTop>
          <StripLabel>启动</StripLabel>
        </LeftStrip>

        <Main>
          <Crumbs>
            <CrumbList>
              <span>车轴机械手(105报文绝对编码取消R y轴) V4.2</span>
              <Tri d="r" c="#fff" s={7} />
              <span>1500hand [CPU 1511T-1 PN]</span>
              <Tri d="r" c="#fff" s={7} />
              <span>工艺对象</span>
              <Tri d="r" c="#fff" s={7} />
              <span>PositioningAxis_Z [DB5]</span>
            </CrumbList>
            <WindowButtons $gap={9}>
              <button aria-label="最小化"><svg width="14" height="14"><path d="M0 10h14v4H0z" fill="#fff" /></svg></button>
              <button aria-label="浮动"><Restore /></button>
              <button aria-label="最大化"><svg width="14" height="14"><path d="M0 0h14v2H0zM0 4h14v10H0z" fill="#fff" /></svg></button>
              <button aria-label="关闭"><Close /></button>
            </WindowButtons>
          </Crumbs>
          <EditorBar />
          <Editor>
            <Tree>
              <TreeItem $sel><button>轴控制面板</button></TreeItem>
              <TreeItem><button>调节</button></TreeItem>
              <TreeItem />
              <TreeItem />
            </Tree>
            <Splitter />
            <Panel>
              <PanelHead><h2>轴控制面板</h2></PanelHead>
              <Steps>
                <Step $first>
                  <StepLabel><T s="主控制：" /></StepLabel>
                  <StepRow>
                    <StepButton><Drive />激活</StepButton>
                    <StepButton $dim><Drive />释放</StepButton>
                  </StepRow>
                </Step>
                <Step>
                  <StepLabel><T s="轴：" /></StepLabel>
                  <StepRow>
                    <StepButton $dim><Ic><circle cx="9" cy="10" r="9" fill="#999" /><path d="M5 10l3 4 6-8" stroke="#fff" strokeWidth="2" /></Ic>启用</StepButton>
                    <StepButton $dim><Ic><circle cx="9" cy="10" r="9" fill="#444" /><path d="M5 5l8 9M13 5l-8 9" stroke="#fff" strokeWidth="2" /></Ic>禁用</StepButton>
                  </StepRow>
                </Step>
                <Step $last>
                  <StepLabel as="label" htmlFor="mode"><T s="操作模式：" /></StepLabel>
                  <StepRow>
                    <Dropdown $w={262}>
                      <select id="mode" disabled><option>速度设定值</option></select>
                      <Tri d="d" c="#777" s={8} />
                    </Dropdown>
                  </StepRow>
                </Step>
              </Steps>
            </Panel>
          </Editor>

          <InspectorHead>
            <HeadTab>
              <Ic>
                <path d="M1 1h15v17H1z" fill="#e8eeff" stroke="#6484d0" />
                <path d="M3 5h5M3 9h3M3 13h5" stroke="#777" />
                <circle cx="11" cy="9" r="4.5" fill="#fff" stroke="#446" strokeWidth="1.6" />
                <path d="M14 12l5 6" stroke="#c98a20" strokeWidth="2.5" />
              </Ic>
              属性
            </HeadTab>
            <HeadTab>
              <Ic>
                <path d="M4 1h13v17H4z" fill="#e8eeff" stroke="#6484d0" />
                <path d="M8 8h3v7M8 15h6M10 4v2" stroke="#0a1070" strokeWidth="2" />
                <path d="M0 3h4V1l4 3-4 3V5H0zM13 15h3v-2l4 3-4 3v-2h-3z" fill="#0a1070" />
              </Ic>
              信息
            </HeadTab>
            <HeadTab $active>
              <Ic>
                <path d="M1 1h15v18H1z" fill="#e8eeff" stroke="#6484d0" />
                <path d="M5 3v5c0 4 5 4 5 0V3M7 11v3c0 4 5 4 5 1" stroke="#1a2a6a" strokeWidth="1.6" />
                <circle cx="12" cy="14" r="2" fill="#1a2a6a" />
              </Ic>
              诊断
            </HeadTab>
            <HeadIcons>
              <button aria-label="浮动"><Restore /></button>
              <button aria-label="折叠"><svg width="14" height="14"><path d="M1 6h12v6H1z" fill="#999" stroke="#eee" strokeWidth="2" /></svg></button>
              <button aria-label="更多"><Tri d="d" c="#fff" s={14} /></button>
            </HeadIcons>
          </InspectorHead>

          <Tabs>
            <Tab>设备信息</Tab>
            <Tab>连接信息</Tab>
            <Tab $active>报警显示</Tab>
          </Tabs>

          <AlarmTools>
            <AlarmButton $tight><Envelopes />当前报警</AlarmButton>
            <AlarmButton $on>
              <Ic>
                <path d="M1 1h5v18H1z" fill="#455068" />
                <path d="M2 3h2v5H2z" fill="#ccd" />
                <path d="M8 7h11v9H8z" fill="#e8efff" stroke="#5b83ea" strokeWidth="1.4" />
                <path d="M8 8l5 5 6-5" stroke="#5b83ea" />
              </Ic>
              报警归档
            </AlarmButton>
            <SmallIcon aria-label="清空归档"><Envelopes extra={<path d="M12 11l8 8M20 11l-8 8" stroke="#0c1468" strokeWidth="2.2" />} /></SmallIcon>
            <SmallIcon aria-label="导出归档">
              <Ic>
                <path d="M1 1h5v18H1z" fill="#999" stroke="#666" />
                <path d="M8 9h11v9H8z" fill="#eee" stroke="#888" />
                <path d="M8 10l6 4 5-4" stroke="#888" strokeWidth="1.2" />
                <path d="M7 4h7V1l5 4-5 4V6H7z" fill="#444" />
              </Ic>
            </SmallIcon>
            <FieldLabel htmlFor="receive"><T s="接收报警：" /></FieldLabel>
            <Dropdown $w={237} $blue>
              <select id="receive"><option>（未选中任何设备）</option></select>
              <Tri d="d" c="#111" s={8} />
            </Dropdown>
            <Sep /><Sep />
            <AutoScroll aria-label="自动滚动">
              <svg width="20" height="22" viewBox="0 0 20 22">
                <rect x="1" y="1" width="17" height="20" fill="#dde6ff" stroke="#8aa4ec" />
                <g stroke="#20206a" strokeWidth="1.6" fill="none">
                  <path d="M7 10l3-7 3 7M8 8h4M7 19l3-7 3 7M8 17h4" />
                </g>
              </svg>
            </AutoScroll>
            <AlarmButton $tight><Envelopes extra={<path d="M13 11h2v8h-2zM17 11h2v8h-2z" fill="#111" stroke="#fff" strokeWidth=".6" />} />冻结报警</AlarmButton>
            <Grow />
            <AlarmButton $last>
              <Ic>
                <path d="M1 3h18v11H1z" fill="#dfe8ff" stroke="#6d90ee" strokeWidth="1.4" />
                <path d="M1 3l9 7 9-7" stroke="#6d90ee" strokeWidth="1.4" />
                <path d="M6 13l5 5 8-9" stroke="#118a2c" strokeWidth="3.2" />
              </Ic>
              确认
            </AlarmButton>
          </AlarmTools>

          <GridArea>
            <GridMain>
              <Table>
                <colgroup>
                  <col style={{ width: 45 }} />
                  {columns.map((c) => <col key={c.label} style={{ width: c.w }} />)}
                  <col style={{ width: 69 }} />
                </colgroup>
                <thead>
                  <tr>
                    <Th />
                    {columns.map((c) => <Th key={c.label}>{c.label}</Th>)}
                    <Th />
                  </tr>
                  <tr>
                    <FilterTd $corner>
                      <button aria-label="清除筛选">
                        <Ic w={22}>
                          <path d="M1 1h14l-5 7v7l-3 2V8z" fill="#f0c81c" stroke="#96720c" />
                          <path d="M10 11l8 8M18 11l-8 8" stroke="#1a1a70" strokeWidth="2.2" />
                        </Ic>
                      </button>
                    </FilterTd>
                    {columns.map((c) => (
                      <FilterTd key={c.label}>
                        <FilterCell>
                          <input aria-label={`筛选 ${c.label}`} defaultValue={c.filter === "on" ? "*" : ""} />
                          <FilterButton aria-label={`筛选列表 ${c.label}`}>
                            <Tri d="d" c={c.filter === "on" ? "#00008c" : "#888"} s={8} />
                          </FilterButton>
                        </FilterCell>
                      </FilterTd>
                    ))}
                    <FilterTd />
                  </tr>
                </thead>
                <tbody>
                  {alarms.map((a) => (
                    <Row key={a.n} $h={a.h}>
                      <NumTd>{a.n}</NumTd>
                      <Td>1500hand [CPU 1511T-1 PN]</Td>
                      <DateTd>{a.date}</DateTd>
                      <TimeTd>{a.time}</TimeTd>
                      <Td>{a.st}</Td>
                      <Td>--</Td>
                      <Td>{a.type}</Td>
                      <Td><T s={a.text} /></Td>
                      <Td />
                      <Td><T s={a.info} /></Td>
                      <BlankTd />
                    </Row>
                  ))}
                </tbody>
              </Table>
              <Filler>{Array.from({ length: 17 }, (_, i) => <FillerRow key={i} />)}</Filler>
              <Watermark aria-hidden>
                <MarkBig><span>西门子工业</span><span>找答案</span></MarkBig>
                <MarkUrl>support.industry.siemens.com/cs</MarkUrl>
              </Watermark>
            </GridMain>
            <ScrollCol>
              <ScrollHead />
              <ScrollButton aria-label="向上滚动"><svg width="12" height="8"><path d="M1 7l5-5 5 5" fill="none" stroke="#555" strokeWidth="2.4" /></svg></ScrollButton>
              <Track>
                <TrackSpace $n={325} />
                <Thumb><svg width="10" height="9"><path d="M0 1h10M0 4h10M0 7h10" stroke="#888" strokeWidth="1.4" /></svg></Thumb>
                <TrackSpace $n={33} />
              </Track>
              <ScrollButton aria-label="向下滚动"><svg width="12" height="8"><path d="M1 1l5 5 5-5" fill="none" stroke="#555" strokeWidth="2.4" /></svg></ScrollButton>
            </ScrollCol>
          </GridArea>
        </Main>

        <RightStrip>
          <RightTop aria-label="展开"><Tri d="l" c="#fff" /></RightTop>
          <SideTab $h={92} $active>
            <Ic>
              <path d="M2 2h14v17H2z" fill="#f4f4ff" stroke="#b08830" strokeWidth="1.6" />
              <path d="M6 0h6v4H6z" fill="#777" />
              <path d="M5 7h8M5 10h7M5 13h5" stroke="#2a2a80" strokeWidth="1.4" />
              <path d="M8 13l4 4 8-7" stroke="#189030" strokeWidth="3.2" />
            </Ic>
            <span>任务</span>
          </SideTab>
          <SideTab $h={72}>
            <Ic>
              <path d="M1 2h8l1 1 1-1h8v14h-8l-1 1-1-1H1z" fill="#eef3ff" stroke="#16168a" strokeWidth="1.6" />
              <path d="M10 3v13" stroke="#5578e0" strokeWidth="2" />
            </Ic>
            <span>库</span>
          </SideTab>
          <SideTab $h={76} $pad={14}><span>插件</span></SideTab>
        </RightStrip>
      </Body>

      <Bottom>
        <PortalButton><Tri d="l" c="#fff" />Portal 视图</PortalButton>
        <TaskList>
          {tasks.map((t, i) => <Task key={i} $active={t.active}>{t.icon}{t.label}</Task>)}
        </TaskList>
        <Square aria-label="窗口">
          <Ic>
            <path d="M2 1h8v10H2z" fill="#fff" />
            <path d="M3 4h5M3 7h5" stroke="#888" />
            <path d="M17 11V5h-4M15 2l-3 3 3 3" stroke="#15155a" strokeWidth="2" />
            <path d="M1 13h18v5H1z" fill="#15155a" />
            <path d="M3 15h3v1H3zM8 15h3v1H8zM13 15h4v1h-4z" fill="#fff" stroke="#fff" />
          </Ic>
        </Square>
        <Status>
          <svg width="18" height="18" viewBox="0 0 18 18"><circle cx="9" cy="9" r="9" fill="#1010f0" /><path d="M4 9l4 4 6-7" fill="none" stroke="#fff" strokeWidth="2.4" /></svg>
          <StatusText>项目 车轴机械手(105报文绝对编码...</StatusText>
          <svg width="35" height="16" viewBox="0 0 35 16">
            {Array.from({ length: 7 }, (_, i) => (
              <rect key={i} x={i * 5} width="4" height="16" fill={i === 1 ? "#fff" : "#ff4a08"} />
            ))}
          </svg>
        </Status>
      </Bottom>
    </Window>
  );
}
